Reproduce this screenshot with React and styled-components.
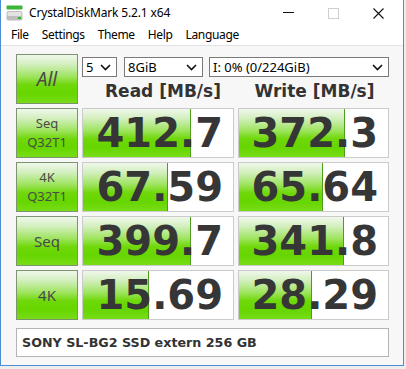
import styled, { createGlobalStyle } from "styled-components";

const Global = createGlobalStyle`
  html, body {
    margin: 0;
    padding: 0;
    background: #ededed;
  }
`;

const Window = styled.div`
  width: 402px;
  height: 365px;
  background: #f7f7f7;
  border: 1px solid #4a8fd6;
  border-top: none;
  display: flex;
  flex-direction: column;
  font-family: "Noto Sans", "DejaVu Sans", sans-serif;
  color: #000;
`;

const TitleBar = styled.div`
  height: 26px;
  background: #fff;
  display: flex;
  align-items: center;
  padding-left: 5px;
  padding-right: 2px;
  font-size: 12px;
`;

const TitleText = styled.span`
  margin-left: 6px;
  flex: 1;
  margin-top: -2px;
  letter-spacing: -0.15px;
`;

const WinButton = styled.div`
  width: 45px;
  height: 26px;
  display: flex;
  align-items: center;
  justify-content: center;
`;

const MenuBar = styled.div`
  height: 18px;
  background: #fff;
  display: flex;
  align-items: center;
  gap: 13px;
  padding: 0 0 2px 10px;
  font-size: 12px;
  letter-spacing: -0.35px;
  border-bottom: 1px solid #e3e3e3;
`;

const Content = styled.div`
  display: grid;
  grid-template-columns: 62px 152px 151px;
  grid-auto-rows: 50px;
  column-gap: 4px;
  row-gap: 4px;
  padding: 8px 0 0 15px;
`;

const greenGradient = `linear-gradient(
    to bottom,
    #f0f7ec 0%,
    #d2efbd 20%,
    #9ee45e 45%,
    #6fd80a 62%,
    #66d600 80%,
    #78dc18 100%
  )`;

const LabelButton = styled.div`
  box-sizing: border-box;
  border: 1px solid #7c9470;
  background: ${greenGradient};
  display: flex;
  flex-direction: column;
  align-items: center;
  justify-content: center;
  color: #4a4a4a;
  font-size: ${(p) => p.$size}px;
  font-style: ${(p) => (p.$italic ? "italic" : "normal")};
  line-height: ${(p) => (p.$italic ? "1" : "19px")};
`;

const TopArea = styled.div`
  grid-column: 2 / 4;
  display: flex;
  flex-direction: column;
`;

const SelectRow = styled.div`
  display: flex;
  margin-top: 3px;
  height: 20px;
`;

const Select = styled.div`
  box-sizing: border-box;
  width: ${(p) => p.$w}px;
  margin-right: ${(p) => p.$gap || 0}px;
  height: 20px;
  border: 1px solid #7a7a7a;
  background: #fff;
  display: flex;
  align-items: center;
  justify-content: space-between;
  padding: 0 5px 0 3px;
  font-size: 13px;
  svg {
    flex-shrink: 0;
  }
`;

const Headers = styled.div`
  display: grid;
  grid-template-columns: 152px 151px;
  column-gap: 4px;
  flex: 1;
  align-items: center;
`;

const Header = styled.div`
  text-align: center;
  font-family: "DejaVu Sans", sans-serif;
  font-weight: bold;
  font-size: 17px;
  color: #333;
  padding-left: ${(p) => (p.$shift ? 10 : 2)}px;
  margin-top: 1px;
`;

const ValueBox = styled.div`
  position: relative;
  box-sizing: border-box;
  border: 1px solid #cbcbcb;
  background: #fff;
  overflow: hidden;
`;

const Fill = styled.div`
  position: absolute;
  left: 0;
  top: 0;
  bottom: 0;
  background: ${greenGradient};
  border-right: 1px solid #4f9d1e;
`;

const Value = styled.div`
  position: relative;
  height: 100%;
  display: flex;
  align-items: center;
  justify-content: flex-end;
  padding-right: 10px;
  font-family: "DejaVu Sans", sans-serif;
  font-weight: bold;
  font-size: 40px;
  color: #363636;
`;

const Comment = styled.div`
  grid-column: 1 / 4;
  box-sizing: border-box;
  height: 29px;
  margin-top: 4px;
  border: 1px solid #b4b4b4;
  background: #fff;
  display: flex;
  align-items: center;
  padding-left: 5px;
  font-family: "DejaVu Sans", sans-serif;
  font-weight: bold;
  font-size: 12.7px;
  color: #333;
`;

const Chevron = () => (
  <svg width="11" height="7" viewBox="0 0 11 7">
    <path d="M1 1l4.5 4.5L10 1" fill="none" stroke="#111" strokeWidth="1.6" />
  </svg>
);

const AppIcon = () => (
  <svg width="17" height="16" viewBox="0 0 17 16">
    <rect x="0.5" y="0.5" width="16" height="4" rx="1" fill="#3fb43a" />
    <rect x="0.5" y="6" width="16" height="9.5" rx="2" fill="#bdbdbd" />
    <rect x="1.5" y="7" width="14" height="4" rx="1" fill="#e3e3e3" />
    <rect x="12" y="12" width="3" height="2" fill="#37b330" />
  </svg>
);

const ratio = (v) => Math.min(1, 0.2 + 0.197 * Math.log10(v));

const rows = [
  { label: ["Seq", "Q32T1"], read: "412.7", write: "372.3" },
  { label: ["4K", "Q32T1"], read: "67.59", write: "65.64" },
  { label: ["Seq"], read: "399.7", write: "341.8" },
  { label: ["4K"], read: "15.69", write: "28.29" },
];

const Result = ({ value }) => (
  <ValueBox>
    <Fill style={{ width: `${ratio(parseFloat(value)) * 100}%` }} />
    <Value>{value}</Value>
  </ValueBox>
);

export default function App() {
  return (
    <>
      <Global />
      <Window>
        <TitleBar>
          <AppIcon />
          <TitleText>CrystalDiskMark 5.2.1 x64</TitleText>
          <WinButton>
            <svg width="11" height="2" viewBox="0 0 11 2">
              <rect width="11" height="1" fill="#111" />
            </svg>
          </WinButton>
          <WinButton>
            <svg width="11" height="11" viewBox="0 0 11 11">
              <rect x="0.5" y="0.5" width="10" height="10" fill="none" stroke="#cfcfcf" />
            </svg>
          </WinButton>
          <WinButton>
            <svg width="11" height="11" viewBox="0 0 11 11">
              <path d="M0.5 0.5l10 10M10.5 0.5l-10 10" stroke="#111" strokeWidth="1.1" />
            </svg>
          </WinButton>
        </TitleBar>
        <MenuBar>
          <span>File</span>
          <span>Settings</span>
          <span>Theme</span>
          <span>Help</span>
          <span>Language</span>
        </MenuBar>
        <Content>
          <LabelButton $size={19} $italic>
            All
          </LabelButton>
          <TopArea>
            <SelectRow>
              <Select $w={35} $gap={7}>
                <span>5</span>
                <Chevron />
              </Select>
              <Select $w={79} $gap={6}>
                <span>8GiB</span>
                <Chevron />
              </Select>
              <Select $w={180}>
                <span>I: 0% (0/224GiB)</span>
                <Chevron />
              </Select>
            </SelectRow>
            <Headers>
              <Header $shift>Read [MB/s]</Header>
              <Header>Write [MB/s]</Header>
            </Headers>
          </TopArea>
          {rows.map((r) => (
            <>
              <LabelButton key={r.label.join()} $size={r.label.length > 1 ? 13 : 15}>
                {r.label.map((l) => (
                  <span key={l}>{l}</span>
                ))}
              </LabelButton>
              <Result value={r.read} />
              <Result value={r.write} />
            </>
          ))}
          <Comment>SONY SL-BG2 SSD extern 256 GB</Comment>
        </Content>
      </Window>
    </>
  );
}
